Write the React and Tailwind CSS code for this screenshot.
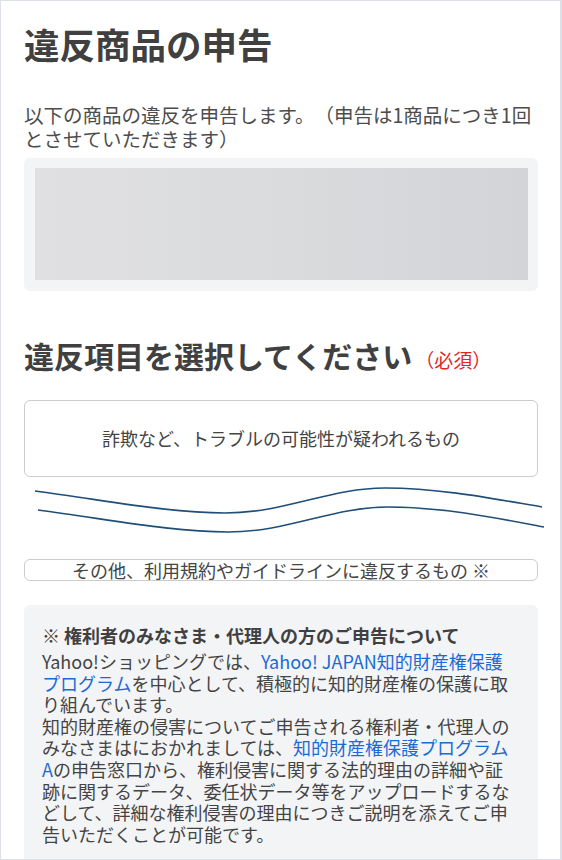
export default function App() {
  const font = { fontFamily: '"Noto Sans CJK JP", "Noto Sans", sans-serif' };
  return (
    <div
      className="w-[562px] h-[860px] overflow-hidden bg-white border-t border-l border-b border-r-2 border-[#dde0e6] text-[#444444] [text-spacing-trim:space-all]"
      style={font}
    >
      <div className="pl-[23px] pr-[22px] pt-[22px]">
        <h1 className="text-[35.5px] leading-[42px] font-bold text-[#404040] whitespace-nowrap">違反商品の申告</h1>

        <p className="mt-[38px] text-[19.5px] leading-[24px] text-[#4d4d4d]">
          以下の商品の違反を申告します。（申告は1商品につき1回とさせていただきます）
        </p>

        <div className="mt-[7px] h-[133px] rounded-md bg-[#f3f4f6] pl-[11px] pr-[10px] pt-[10px] pb-[11px]">
          <div className="h-full w-full bg-linear-to-r from-[#e0e0e2] via-[#dadbdd] to-[#d3d4d7]"></div>
        </div>

        <h2 className="mt-[44px] h-[40px] text-[30px] leading-[40px] font-bold text-[#404040] whitespace-nowrap">
          違反項目を選択してください
          <span className="text-[19px] leading-[20px] font-normal text-[#e0261f] ml-[3px]">（必須）</span>
        </h2>

        <div className="mt-[25px] h-[77px] rounded-md border border-[#cccccc] flex items-center justify-center">
          <span className="text-[18px] leading-[24px] text-[#444444] -mt-[2px]">詐欺など、トラブルの可能性が疑われるもの</span>
        </div>

        <svg className="-ml-[24px] block" width="548" height="82" viewBox="0 0 548 82" fill="none">
          <path
            d="M35 14 C 110 24, 170 36, 225 36 C 285 36, 330 11, 385 11 C 440 11, 495 22, 542 30"
            stroke="#1f4e79"
            strokeWidth="1.6"
          />
          <path
            d="M38 33 C 113 43, 173 55, 228 55 C 288 55, 333 30, 388 30 C 443 30, 497 41, 544 50"
            stroke="#1f4e79"
            strokeWidth="1.6"
          />
        </svg>

        <div className="h-[22px] rounded-md border border-[#cccccc] flex items-center justify-center">
          <span className="text-[18px] leading-[20px] text-[#444444] whitespace-nowrap">その他、利用規約やガイドラインに違反するもの ※</span>
        </div>

        <div className="mt-[24px] rounded-md bg-[#f3f4f6] pl-[18px] pr-[12px] pt-[19px] pb-[20px]">
          <p className="mb-[4px] text-[18px] leading-[23px] font-bold text-[#404040] whitespace-nowrap">※ 権利者のみなさま・代理人の方のご申告について</p>
          <div className="text-[18px] leading-[21.6px] text-[#444444] whitespace-nowrap">
            <div>
              Yahoo!ショッピングでは、<span className="text-[#1a6ad6]">Yahoo! JAPAN知的財産権保護</span>
            </div>
            <div>
              <span className="text-[#1a6ad6]">プログラム</span>を中心として、積極的に知的財産権の保護に取
            </div>
            <div>り組んでいます。</div>
            <div>知的財産権の侵害についてご申告される権利者・代理人の</div>
            <div>
              みなさまはにおかれましては、<span className="text-[#1a6ad6]">知的財産権保護プログラム</span>
            </div>
            <div>
              <span className="text-[#1a6ad6]">A</span>の申告窓口から、権利侵害に関する法的理由の詳細や証
            </div>
            <div>跡に関するデータ、委任状データ等をアップロードするな</div>
            <div>どして、詳細な権利侵害の理由につきご説明を添えてご申</div>
            <div>告いただくことが可能です。</div>
          </div>
        </div>
      </div>
    </div>
  );
}
